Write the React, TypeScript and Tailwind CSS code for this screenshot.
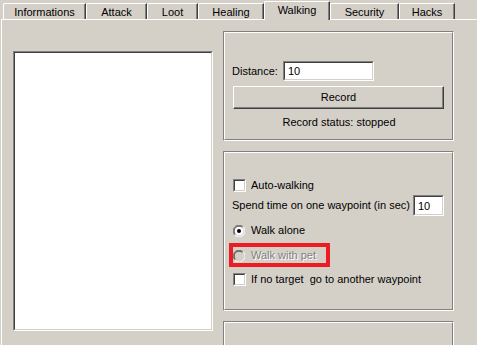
import React from "react";

const tabs = [
  { label: "Informations", w: 83 },
  { label: "Attack", w: 61 },
  { label: "Loot", w: 51 },
  { label: "Healing", w: 66 },
  { label: "Walking", w: 66, active: true },
  { label: "Security", w: 69 },
  { label: "Hacks", w: 56 },
];

function Sunken({ className, children }: { className?: string; children?: React.ReactNode }) {
  return (
    <div className={"shrink-0 border border-t-[#808080] border-l-[#808080] border-b-white border-r-white " + (className ?? "")}>
      <div className="w-full h-full border border-t-[#404040] border-l-[#404040] border-b-[#d4d0c8] border-r-[#d4d0c8] bg-white">
        {children}
      </div>
    </div>
  );
}

function Group({ className, children }: { className?: string; children?: React.ReactNode }) {
  return (
    <div className={"shrink-0 border border-t-[#808080] border-l-[#808080] border-b-white border-r-white " + (className ?? "")}>
      <div className="w-full h-full border border-t-white border-l-white border-b-[#808080] border-r-[#808080]">
        {children}
      </div>
    </div>
  );
}

function Radio({ checked, disabled }: { checked?: boolean; disabled?: boolean }) {
  return (
    <svg width="12" height="12" viewBox="0 0 12 12" className="shrink-0">
      <circle cx="6" cy="6" r="5.5" fill={disabled ? "#d4d0c8" : "#ffffff"} />
      <path d="M10.2 1.8 A5.5 5.5 0 0 0 1.8 10.2" fill="none" stroke="#808080" strokeWidth="1" />
      <path d="M9.5 2.5 A4.5 4.5 0 0 0 2.5 9.5" fill="none" stroke="#404040" strokeWidth="1" />
      <path d="M1.8 10.2 A5.5 5.5 0 0 0 10.2 1.8" fill="none" stroke="#ffffff" strokeWidth="1" />
      <path d="M2.5 9.5 A4.5 4.5 0 0 0 9.5 2.5" fill="none" stroke="#d4d0c8" strokeWidth="1" />
      {checked && <circle cx="6" cy="6" r="2" fill="#000000" />}
    </svg>
  );
}

export default function App() {
  return (
    <div className="relative w-[477px] h-[345px] overflow-hidden bg-[#d4d0c8] text-black text-[11px] leading-[13px] font-['Liberation_Sans',Arial,sans-serif]">
      {/* tabs */}
      <div className="flex items-end h-[19px] pl-[3px]">
        {tabs.map((t) =>
          t.active ? (
            <div
              key={t.label}
              style={{ width: t.w }}
              className="relative z-10 h-[19px] -mb-[1px] bg-[#d4d0c8] border-t border-l border-white rounded-tl-[2px] border-r border-r-[#404040] shadow-[inset_-1px_0_#808080] flex justify-center pt-[2px]"
            >
              {t.label}
            </div>
          ) : (
            <div
              key={t.label}
              style={{ width: t.w }}
              className="h-[16px] border-t border-l border-white rounded-tl-[2px] border-r border-r-[#404040] shadow-[inset_-1px_0_#808080] flex justify-center pt-[2px]"
            >
              {t.label}
            </div>
          )
        )}
      </div>

      {/* panel */}
      <div className="ml-[1px] h-[326px] border-t border-l border-white flex items-start pl-[11px] pt-[11px] gap-[10px]">
        <Sunken className="mt-[20px] w-[200px] h-[280px]" />

        <div className="flex flex-col gap-[10px] shrink-0">
          <Group className="w-[231px] h-[110px]">
            <div className="flex flex-col px-[7px] pt-[28px]">
              <div className="flex items-center h-[20px]">
                <span className="w-[51px]">Distance:</span>
                <Sunken className="w-[91px] h-[20px]">
                  <div className="pl-[3px] pt-[2px]">10</div>
                </Sunken>
              </div>
              <div className="mt-[5px] ml-[1px] h-[23px] w-[211px] border border-t-white border-l-white border-b-[#404040] border-r-[#404040] shadow-[inset_-1px_-1px_#808080] flex items-center justify-center">
                Record
              </div>
              <div className="mt-[7px] text-center pl-[1px]">Record status: stopped</div>
            </div>
          </Group>

          <Group className="w-[231px] h-[160px]">
            <div className="flex flex-col pl-[8px] pt-[26px]">
              <div className="flex items-center h-[13px] gap-[5px]">
                <Sunken className="w-[13px] h-[13px]" />
                <span>Auto-walking</span>
              </div>
              <div className="flex items-center h-[21px] mt-[3px] -ml-[1px]">
                <span className="w-[181px]">Spend time on one waypoint (in sec)</span>
                <Sunken className="w-[31px] h-[21px]">
                  <div className="pl-[3px] pt-[3px]">10</div>
                </Sunken>
              </div>
              <div className="flex items-center h-[13px] mt-[8px] gap-[6px]">
                <Radio checked />
                <span>Walk alone</span>
              </div>
              <div className="flex items-center h-[13px] mt-[12px] gap-[6px]">
                <Radio disabled />
                <span className="text-[#808080] [text-shadow:1px_1px_0_#ffffff]">Walk with pet</span>
              </div>
              <div className="flex items-center h-[13px] mt-[11px] gap-[5px]">
                <Sunken className="w-[13px] h-[13px]" />
                <span>If no target&nbsp; go to another waypoint</span>
              </div>
            </div>
          </Group>

          <Group className="w-[231px] h-[60px]" />
        </div>
      </div>

      {/* red annotation */}
      <div className="absolute left-[229px] top-[243px] w-[101px] h-[24px] border-[4px] border-[#ed1c24]" />
    </div>
  );
}
